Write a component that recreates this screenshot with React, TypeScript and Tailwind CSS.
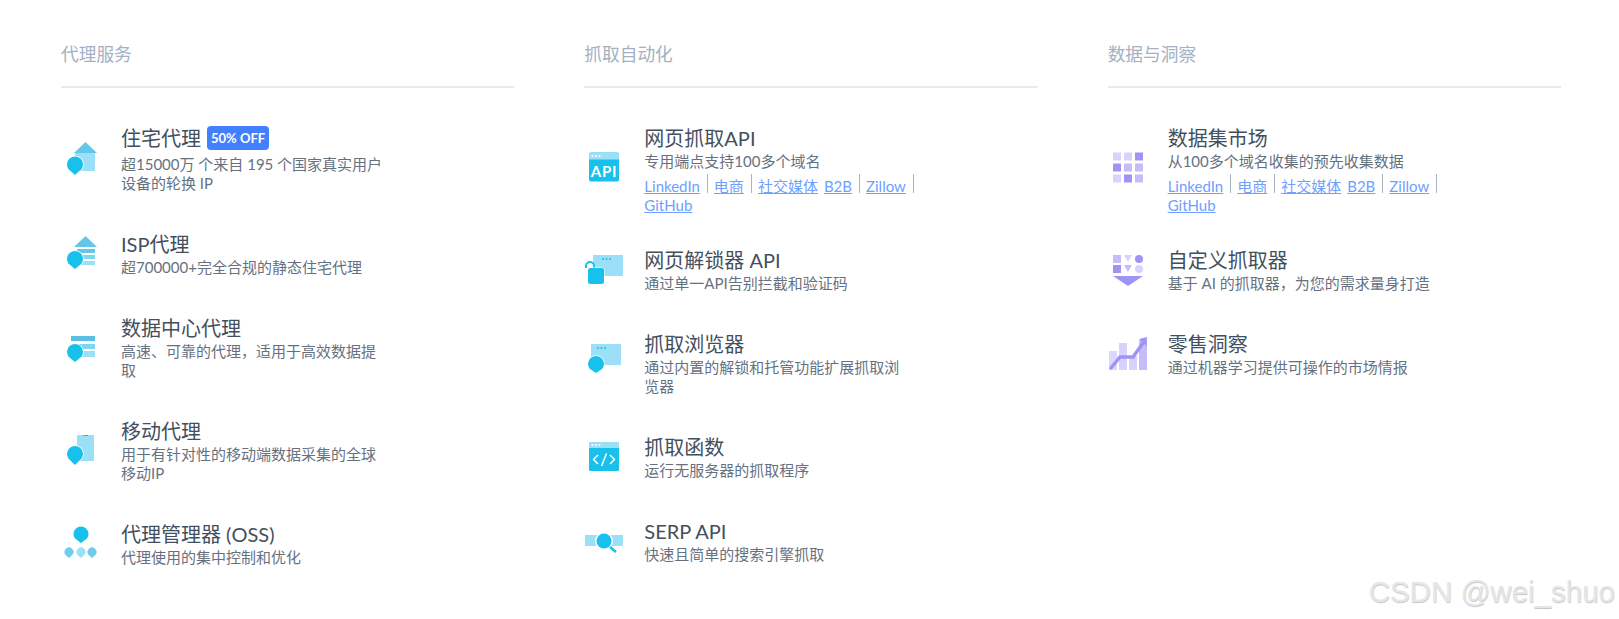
import type { ReactNode } from "react";

const FONT = "font-['Lato','Noto_Sans_CJK_SC',sans-serif]";

const BLUE = "#17c1eb";
const SKY = "#9be0f7";
const PURPLE = "#9d94f3";
const LILAC = "#c4bdfa";
const PALE = "#d7d3fd";

// map pin with the white halo used on most of the proxy icons
const Pin = ({ x, y, r = 8, tip, fill = BLUE, halo = true }: { x: number; y: number; r?: number; tip: number; fill?: string; halo?: boolean }) => (
  <path
    d={`M${x} ${tip} L${x - r * 0.8} ${y + r * 0.6} A${r} ${r} 0 1 1 ${x + r * 0.8} ${y + r * 0.6} Z`}
    fill={fill}
    stroke={halo ? "#fff" : "none"}
    strokeWidth={halo ? 1.5 : 0}
    paintOrder="stroke"
  />
);

const Icon = ({ children, shift = 0 }: { children: ReactNode; shift?: number }) => (
  <svg width="40" height="40" viewBox="0 0 40 40" className="shrink-0 overflow-visible">
    <g transform={`translate(0 ${shift})`}>{children}</g>
  </svg>
);

const Dots = ({ x, y, fill }: { x: number; y: number; fill: string }) => (
  <g fill={fill}>
    <circle cx={x} cy={y} r="1" />
    <circle cx={x + 3.5} cy={y} r="1" />
    <circle cx={x + 7} cy={y} r="1" />
  </g>
);

const icons = {
  residential: (
    <Icon shift={-1}>
      <path d="M13 16 L24.5 5 L36 16 Z" fill="#62c8ea" />
      <rect x="14" y="16" width="20" height="18" fill={SKY} />
      <Pin x={14} y={27.5} tip={38} />
    </Icon>
  ),
  isp: (
    <Icon>
      <path d="M13 14 L24.5 3 L36 14 Z" fill="#62c8ea" />
      <rect x="16" y="16" width="18" height="4" fill="#62c8ea" />
      <rect x="16" y="22" width="18" height="4" fill="#7dd6f3" />
      <rect x="16" y="28" width="18" height="4" fill={SKY} />
      <Pin x={14} y={26} tip={36} />
    </Icon>
  ),
  datacenter: (
    <Icon>
      <rect x="10" y="9" width="24" height="5" fill="#5bbfe3" />
      <rect x="10" y="17" width="24" height="5" fill="#7dd6f3" />
      <rect x="10" y="24" width="24" height="6" fill={SKY} />
      <Pin x={14} y={25} tip={35} />
    </Icon>
  ),
  mobile: (
    <Icon>
      <rect x="16" y="5" width="17" height="26" fill={SKY} />
      <rect x="22" y="5" width="5" height="1" fill={BLUE} />
      <Pin x={14} y={24} tip={35} />
    </Icon>
  ),
  manager: (
    <Icon>
      <Pin x={20} y={11} r={7.5} tip={20} halo={false} />
      <Pin x={8} y={29} r={4.5} tip={35} fill="#6fcdec" halo={false} />
      <Pin x={20} y={29} r={4.5} tip={35} fill={SKY} halo={false} />
      <Pin x={31} y={29} r={4.5} tip={35} fill="#6fcdec" halo={false} />
    </Icon>
  ),
  api: (
    <Icon shift={3.5}>
      <rect x="5" y="3" width="30" height="29" rx="2" fill={BLUE} />
      <path d="M5 10 V5 a2 2 0 0 1 2 -2 H33 a2 2 0 0 1 2 2 V10 Z" fill={SKY} />
      <Dots x={8.5} y={6.5} fill="#fff" />
      <text x="20" y="27" textAnchor="middle" fill="#fff" fontSize="15" fontWeight="700" fontFamily="Lato" letterSpacing="0.8">
        API
      </text>
    </Icon>
  ),
  unlocker: (
    <Icon>
      <rect x="9" y="6" width="30" height="21" fill={SKY} />
      <Dots x={19} y={10} fill={BLUE} />
      <path d="M2 19 V17 a4 4 0 0 1 8 0 V20" fill="none" stroke={BLUE} strokeWidth="2" />
      <rect x="4" y="19" width="16" height="16" rx="2.5" fill={BLUE} stroke="#fff" strokeWidth="1" paintOrder="stroke" />
    </Icon>
  ),
  browser: (
    <Icon>
      <rect x="7" y="1" width="30" height="21" fill={SKY} />
      <Dots x={14} y={5} fill={BLUE} />
      <Pin x={12} y={21} tip={30} />
    </Icon>
  ),
  functions: (
    <Icon>
      <rect x="5" y="6" width="30" height="29" rx="1.5" fill={BLUE} />
      <rect x="5" y="6" width="30" height="6" fill={SKY} />
      <Dots x={8.5} y={9} fill="#fff" />
      <path d="M14 19 L9.5 23.5 L14 28 M26 19 L30.5 23.5 L26 28 M22.5 17.5 L17.5 30" fill="none" stroke="#fff" strokeWidth="1.5" />
    </Icon>
  ),
  serp: (
    <Icon>
      <rect x="1" y="15" width="38" height="11" fill={SKY} />
      <circle cx="20" cy="21" r="9" fill="#fff" />
      <circle cx="20" cy="21" r="7.5" fill={BLUE} />
      <path d="M26 27 L32 32" stroke={BLUE} strokeWidth="2.5" />
    </Icon>
  ),
  datasets: (
    <Icon shift={3.5}>
      {[
        [5, 3, PALE], [16, 3, PALE], [27, 3, PURPLE],
        [5, 14, PURPLE], [16, 14, LILAC], [27, 14, LILAC],
        [5, 25, PALE], [16, 25, PURPLE], [27, 25, LILAC],
      ].map(([x, y, fill]) => (
        <rect key={`${x}-${y}`} x={x} y={y} width="8" height="8" fill={fill as string} />
      ))}
    </Icon>
  ),
  custom: (
    <Icon>
      <rect x="5" y="6" width="8" height="8" fill={LILAC} />
      <path d="M16 6 H24 L20 13 Z" fill={PALE} />
      <circle cx="31" cy="10" r="4" fill={PURPLE} />
      <rect x="5" y="16" width="8" height="8" fill={PURPLE} />
      <path d="M16 16 H24 L20 23 Z" fill={LILAC} />
      <circle cx="31" cy="20" r="4" fill={PALE} />
      <path d="M5 27 H35 L20 37 Z" fill={PURPLE} />
    </Icon>
  ),
  retail: (
    <Icon>
      <rect x="1" y="18" width="8" height="19" fill="#dcd8fd" />
      <rect x="11" y="10" width="8" height="27" fill={PALE} />
      <rect x="21" y="23" width="8" height="14" fill={PALE} />
      <rect x="31" y="7" width="8" height="30" fill={LILAC} />
      <path d="M3 35 L12 24 H25 L35 10" fill="none" stroke={PURPLE} strokeWidth="3.5" strokeLinecap="round" />
      <path d="M31 6 L39 4 L38.5 13 Z" fill={PURPLE} />
    </Icon>
  ),
};

type Item = {
  icon: ReactNode;
  title: string;
  desc: string;
  badge?: boolean;
  links?: boolean;
};

const columns: { heading: string; items: Item[] }[] = [
  {
    heading: "代理服务",
    items: [
      { icon: icons.residential, title: "住宅代理", desc: "超15000万 个来自 195 个国家真实用户设备的轮换 IP", badge: true },
      { icon: icons.isp, title: "ISP代理", desc: "超700000+完全合规的静态住宅代理" },
      { icon: icons.datacenter, title: "数据中心代理", desc: "高速、可靠的代理，适用于高效数据提取" },
      { icon: icons.mobile, title: "移动代理", desc: "用于有针对性的移动端数据采集的全球移动IP" },
      { icon: icons.manager, title: "代理管理器 (OSS)", desc: "代理使用的集中控制和优化" },
    ],
  },
  {
    heading: "抓取自动化",
    items: [
      { icon: icons.api, title: "网页抓取API", desc: "专用端点支持100多个域名", links: true },
      { icon: icons.unlocker, title: "网页解锁器 API", desc: "通过单一API告别拦截和验证码" },
      { icon: icons.browser, title: "抓取浏览器", desc: "通过内置的解锁和托管功能扩展抓取浏览器" },
      { icon: icons.functions, title: "抓取函数", desc: "运行无服务器的抓取程序" },
      { icon: icons.serp, title: "SERP API", desc: "快速且简单的搜索引擎抓取" },
    ],
  },
  {
    heading: "数据与洞察",
    items: [
      { icon: icons.datasets, title: "数据集市场", desc: "从100多个域名收集的预先收集数据", links: true },
      { icon: icons.custom, title: "自定义抓取器", desc: "基于 AI 的抓取器，为您的需求量身打造" },
      { icon: icons.retail, title: "零售洞察", desc: "通过机器学习提供可操作的市场情报" },
    ],
  },
];

const linkClass = "text-[15px] leading-[19px] text-[#6ea0ff] underline";

const DomainLinks = () => (
  <div className="mt-[3px] -mr-[14px] -mb-[3px] flex flex-wrap">
    {["LinkedIn", "电商", "社交媒体", "B2B", "Zillow", "GitHub"].map((label) => {
      const plain = label === "社交媒体" || label === "GitHub";
      return (
        <span
          key={label}
          className={
            plain
              ? "mr-[6px] h-[19px]"
              : "mr-[6px] h-[19px] border-r border-[#a9b4c0] pr-[7px]"
          }
        >
          <a className={linkClass}>{label}</a>
        </span>
      );
    })}
  </div>
);

const Entry = ({ icon, title, desc, badge, links }: Item) => (
  <div className="flex items-center gap-5">
    {icon}
    <div className="w-[266px]">
      <div className={`flex h-[29px] items-center gap-[6px] text-[20px] text-[#434f5d] ${badge ? "mb-[3px]" : ""}`}>
        {title}
        {badge && (
          <span className="rounded-[4px] bg-[#4280ff] px-[4px] text-[13px] leading-[24px] font-bold text-white">
            50% OFF
          </span>
        )}
      </div>
      <p className="text-[15px] leading-[19px] text-[#66717f]">{desc}</p>
      {links && <DomainLinks />}
    </div>
  </div>
);

export default function App() {
  return (
    <div className={`relative h-screen overflow-hidden bg-white pl-[61px] ${FONT}`}>
      <div className="grid w-[1500px] grid-cols-3 gap-[70px] pt-[43px]">
        {columns.map((col) => (
          <section key={col.heading}>
            <h3 className="border-b-2 border-[#e6ebf1] pb-[19px] text-[17.7px] leading-[24px] font-normal text-[#a3b1c2]">
              {col.heading}
            </h3>
            <div className="mt-[35px] flex flex-col gap-[36px]">
              {col.items.map((item) => (
                <Entry key={item.title} {...item} />
              ))}
            </div>
          </section>
        ))}
      </div>
      <div className="absolute right-[4px] bottom-[9px] font-['Liberation_Sans',sans-serif] text-[29.5px] leading-[36px] text-[#e6e6e6] [text-shadow:0.5px_0.5px_1px_#c4c4c4]">
        CSDN @wei_shuo
      </div>
    </div>
  );
}
